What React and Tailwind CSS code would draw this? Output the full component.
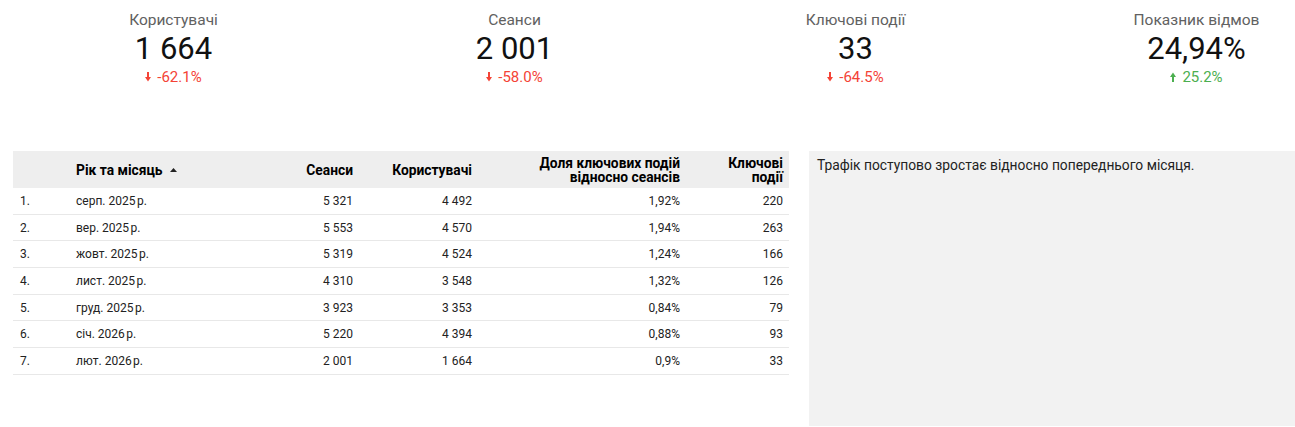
const cards = [
  { title: 'Користувачі', value: '1 664', delta: '-62.1%', up: false },
  { title: 'Сеанси', value: '2 001', delta: '-58.0%', up: false },
  { title: 'Ключові події', value: '33', delta: '-64.5%', up: false },
  { title: 'Показник відмов', value: '24,94%', delta: '25.2%', up: true },
];

const rows = [
  ['серп. 2025\u202Fр.', '5 321', '4 492', '1,92%', '220'],
  ['вер. 2025\u202Fр.', '5 553', '4 570', '1,94%', '263'],
  ['жовт. 2025\u202Fр.', '5 319', '4 524', '1,24%', '166'],
  ['лист. 2025\u202Fр.', '4 310', '3 548', '1,32%', '126'],
  ['груд. 2025\u202Fр.', '3 923', '3 353', '0,84%', '79'],
  ['січ. 2026\u202Fр.', '5 220', '4 394', '0,88%', '93'],
  ['лют. 2026\u202Fр.', '2 001', '1 664', '0,9%', '33'],
];

const Arrow = ({ up }) => (
  <svg width="6" height="10" viewBox="0 0 6 10" className={up ? 'rotate-180' : ''}>
    <rect x="2" y="0" width="2" height="5.5" fill="currentColor" />
    <path d="M0 5 L6 5 L3 9.5 Z" fill="currentColor" />
  </svg>
);

const Scorecard = ({ title, value, delta, up }) => (
  <div className="w-[341px] shrink-0 flex flex-col items-center">
    <div className="text-[15.5px] leading-[20px] mt-[10px] text-[#616161]">{title}</div>
    <div className="text-[31px] leading-[36px] text-[#111] mt-[1px]">{value}</div>
    <div className={`flex items-center gap-[6px] text-[15px] leading-[18px] mt-[1px] ${up ? 'text-[#4caf50]' : 'text-[#f44336]'}`}>
      <Arrow up={up} />
      <span>{delta}</span>
    </div>
  </div>
);

export default function App() {
  return (
    <div className="w-[1295px] h-[427px] bg-white overflow-hidden" style={{ fontFamily: 'Roboto, sans-serif' }}>
      <div className="flex pl-[3px]">
        {cards.map((c) => (
          <Scorecard key={c.title} {...c} />
        ))}
      </div>

      <div className="flex mt-[65px] pl-[13px] gap-[20px]">
        <div className="w-[776px] text-[12px] text-[#222]">
          <div className="flex items-center h-[37px] bg-[#eeeeee] font-bold text-[13.8px] text-black leading-[14px]">
            <div className="w-[63px]"></div>
            <div className="w-[200px] flex items-center gap-[7px]">
              Рік та місяць
              <svg width="7" height="4" viewBox="0 0 7 4"><path d="M0 4 L3.5 0 L7 4 Z" fill="#222" /></svg>
            </div>
            <div className="w-[77px] text-right">Сеанси</div>
            <div className="w-[119px] text-right">Користувачі</div>
            <div className="w-[208px] text-right">Доля ключових подій<br />відносно сеансів</div>
            <div className="w-[103px] text-right">Ключові<br />події</div>
          </div>
          {rows.map((r, i) => (
            <div key={i} className="flex items-center h-[26.7px] border-b border-[#e8e8e8]">
              <div className="w-[63px] pl-[7px]">{i + 1}.</div>
              <div className="w-[200px]">{r[0]}</div>
              <div className="w-[77px] text-right">{r[1]}</div>
              <div className="w-[119px] text-right">{r[2]}</div>
              <div className="w-[208px] text-right">{r[3]}</div>
              <div className="w-[103px] text-right">{r[4]}</div>
            </div>
          ))}
        </div>

        <div className="flex-1 h-[275px] bg-[#f2f2f2] px-[8px] pt-[5px] text-[13.8px] leading-[18px] text-[#222]">
          Трафік поступово зростає відносно попереднього місяця.
        </div>
      </div>
    </div>
  );
}
